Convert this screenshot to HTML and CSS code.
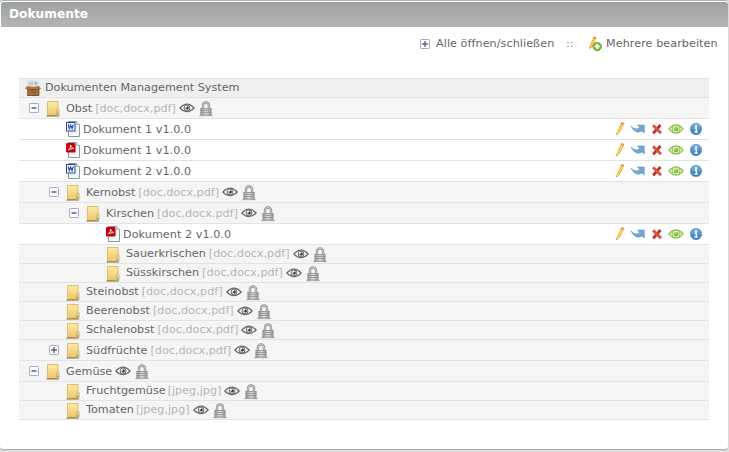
FILE: index.html
```
<!DOCTYPE html>
<html lang="de">
<head>
<meta charset="utf-8">
<title>Dokumente</title>
<link rel="stylesheet" href="styles.css">
</head>
<body>
<svg class="defs" width="0" height="0">
<defs>
<linearGradient id="gold" x2="0" y2="1"><stop stop-color="#fdeba6"/><stop offset="1" stop-color="#ecc76b"/></linearGradient>
<linearGradient id="steel" x2="1" y2="0"><stop stop-color="#909090"/><stop offset=".5" stop-color="#e0e0e0"/><stop offset="1" stop-color="#909090"/></linearGradient>
<linearGradient id="blue" x2="0" y2="1"><stop stop-color="#7fb3e2"/><stop offset="1" stop-color="#3574b5"/></linearGradient>
<symbol id="folder" viewBox="0 0 16 18"><path d="M1 16.500h13" stroke="#bbb"/><path d="M2.500 1.500h10.500v14h-10.500z" fill="url(#gold)" stroke="#e0bd6a"/><path d="M2 15.600h11" stroke="#b98d40" stroke-width="1.300"/><path d="M11.500 15.500V11q.5-2 2-2l.5 1v5.500z" fill="#f6dd95" stroke="#cfa554" stroke-width=".8"/><path d="M12.800 12.500v3" stroke="#35b6d5"/></symbol>
<symbol id="eye" viewBox="0 0 16 12"><path d="M.8 6Q8-1.700 15.200 6 8 13.200.8 6z" fill="#fff" stroke="#6b6b6b" stroke-width="1.100"/><circle cx="8" cy="6" r="3" fill="#bbb" stroke="#777"/><circle cx="8.400" cy="6" r="1.300" fill="#333"/><circle cx="7" cy="4.700" r=".9" fill="#fff"/></symbol>
<symbol id="lock" viewBox="0 0 14 16"><path d="M0 14.700h14" stroke="#bbb"/><path d="M4 8V4.500a3 3 0 0 1 6 0V8" fill="none" stroke="#8c8c8c" stroke-width="2.400"/><path d="M4 8V4.500a3 3 0 0 1 6 0V8" fill="none" stroke="#d5d5d5" stroke-width="1"/><path d="M1.500 7h11v7.500h-11z" fill="url(#steel)"/><path d="M1.500 7.500h11M1.500 9.500h11M1.500 11.500h11M1 14h12" stroke="#909090" stroke-width=".8"/></symbol>
<symbol id="minus" viewBox="0 0 10 10"><rect x=".5" y=".5" width="9" height="9" rx=".7" fill="#fbfbfe" stroke="#aaa8c8"/><path d="M2.500 5h5" stroke="#625e84" stroke-width="1.500"/></symbol>
<symbol id="plus" viewBox="0 0 10 10"><rect x=".5" y=".5" width="9" height="9" rx=".7" fill="#fbfbfe" stroke="#aaa8c8"/><path d="M2 5h6M5 2v6" stroke="#625e84" stroke-width="1.400"/></symbol>
<symbol id="page" viewBox="0 0 15 16"><path d="M2.500.5h8l3 3v12h-11z" fill="#f5fbfb" stroke="#839b9b"/><path d="M10.500.5v3h3" fill="#dcebea" stroke="#9db2b0" stroke-width=".8"/><path d="M5 6h7M5 8h7M5 10h7M5 12h7" stroke="#dceaea" stroke-width=".7"/></symbol>
<symbol id="word" viewBox="0 0 15 16"><use href="#page"/><rect x=".5" y="1.500" width="8.500" height="8.500" fill="#f8f9ff" stroke="#2c46a0"/><path d="M2.200 3.500l1.100 4.200L4.700 4l1.400 3.700L7.300 3.500" fill="none" stroke="#2742a5" stroke-width="1.100"/></symbol>
<symbol id="pdf" viewBox="0 0 15 16"><use href="#page"/><rect y="1" width="9.500" height="9.500" rx="1.300" fill="#c9000b"/><path d="M4.600 3q.3 2.400 3 3.700-3-.5-5 1.300 2.100-2 2-5z" fill="none" stroke="#fff" stroke-width=".85"/></symbol>
<symbol id="pencil" viewBox="0 0 10 16"><path d="M1.200 14l.8-3.500L6 2l3 1-4 8.500z" fill="#f5b932"/><path d="M3.300 11.500L7.300 3" stroke="#ffe27a"/><path d="M5.700 2.800L6.500 1l2.800 1-.8 1.800z" fill="#df8b74"/><path d="M1.200 14l.8-3.400 2.700 1z" fill="#e4c6a5"/><path d="M1.200 14l.3-1.300.9.400z" fill="#493a30"/></symbol>
<symbol id="move" viewBox="0 0 16 12"><path d="M1 3Q4 6.800 7.500 5.800L9.800 4.600 7.500 2h6.800v8L12 7.900Q5.500 12 1 3z" fill="#71a7d2" stroke="#5f95c4" stroke-width=".6"/></symbol>
<symbol id="delete" viewBox="0 0 12 12"><path d="M2.200 10.300Q5.500 6.500 9.500 2" stroke="#c72c20" stroke-width="2.800" fill="none"/><path d="M2 2.300l8 7.900" stroke="#dd5143" stroke-width="2.800"/></symbol>
<symbol id="show" viewBox="0 0 16 12"><path d="M.9 6Q8-2 15.100 6 8 14 .9 6z" fill="#f8fcef" stroke="#90c54c" stroke-width="1.300"/><path d="M5 3q-2 3 0 6M11 3q2 3 0 6" fill="none" stroke="#90c54c"/><circle cx="8" cy="6" r="2.500" fill="#86bd43"/><circle cx="7.300" cy="5" r=".8" fill="#fff"/></symbol>
<symbol id="info" viewBox="0 0 12 12"><circle cx="6" cy="6" r="5.700" fill="url(#blue)" stroke="#477fb8" stroke-width=".6"/><circle cx="6" cy="3" r="1.100" fill="#fff"/><path d="M4.700 5h1.600v4M4.300 9.200h3.600" fill="none" stroke="#fff" stroke-width="1.300"/></symbol>
<symbol id="box" viewBox="0 0 16 17"><path d="M2.500 6.500L3.500 1.500l4-.8 1 4 1-3.500 4 1-.5 4.500z" fill="#d8e5ec" stroke="#b5c1c9" stroke-width=".5"/><path d="M5 2.500v3M7 2v3" stroke="#df9b9b"/><path d="M10.500 2.500l1 2" stroke="#60a86c" stroke-width="1.500"/><path d="M2 7h12v9H2z" fill="#a06d42"/><path d="M0 9l2-3 6 1-1.500 2.500zM16 9l-2-3-6 1 1 2.500z" fill="#b17845"/><path d="M2 9.500h12" stroke="#7a5029" stroke-width=".8"/><path d="M2.500 15.500h11.500V8" fill="none" stroke="#7a5029" stroke-width=".8"/><path d="M6 12h4" stroke="#7a5029"/></symbol>
<symbol id="multi" viewBox="0 0 14 16"><path d="M1 13l.8-3.500L5.300 1.500l3 1-4 9z" fill="#f3b63a"/><path d="M3 11L6.500 3" stroke="#ffe27a" stroke-width=".8"/><path d="M5 2.200L5.800.6l2.700 1-.7 1.800z" fill="#df8d74"/><path d="M1 13.500l.7-3.500 2 1z" fill="#d7b18c"/><circle cx="9.200" cy="10.500" r="4.300" fill="#79b82d" stroke="#5da01f" stroke-width=".6"/><path d="M6.700 10.500h5M9.200 8v5" stroke="#fff" stroke-width="1.800"/></symbol>
</defs>
</svg>
<main class="panel">
<h1 class="title">Dokumente</h1>
<div class="tools"><svg class="toggle"><use href="#plus"/></svg><a class="toggle-all">Alle öffnen/schließen</a><span class="sep">::</span><svg class="multi"><use href="#multi"/></svg><a class="edit-all">Mehrere bearbeiten</a></div>
<ul class="tree">
<li class="root"><svg class="box"><use href="#box"/></svg><span>Dokumenten Management System</span></li>
<li class="row l0"><svg class="toggle"><use href="#minus"/></svg><svg class="folder"><use href="#folder"/></svg><span class="name">Obst</span><span class="types">[doc,docx,pdf]</span><svg class="eye"><use href="#eye"/></svg><svg class="lock"><use href="#lock"/></svg></li>
<li class="row doc l1"><svg class="file"><use href="#word"/></svg><span class="name">Dokument 1 v1.0.0</span><div class="actions"><svg class="pencil"><use href="#pencil"/></svg><svg class="move"><use href="#move"/></svg><svg class="delete"><use href="#delete"/></svg><svg class="show"><use href="#show"/></svg><svg class="info"><use href="#info"/></svg></div></li>
<li class="row doc l1"><svg class="file"><use href="#pdf"/></svg><span class="name">Dokument 1 v1.0.0</span><div class="actions"><svg class="pencil"><use href="#pencil"/></svg><svg class="move"><use href="#move"/></svg><svg class="delete"><use href="#delete"/></svg><svg class="show"><use href="#show"/></svg><svg class="info"><use href="#info"/></svg></div></li>
<li class="row doc l1"><svg class="file"><use href="#word"/></svg><span class="name">Dokument 2 v1.0.0</span><div class="actions"><svg class="pencil"><use href="#pencil"/></svg><svg class="move"><use href="#move"/></svg><svg class="delete"><use href="#delete"/></svg><svg class="show"><use href="#show"/></svg><svg class="info"><use href="#info"/></svg></div></li>
<li class="row l1"><svg class="toggle"><use href="#minus"/></svg><svg class="folder"><use href="#folder"/></svg><span class="name">Kernobst</span><span class="types">[doc,docx,pdf]</span><svg class="eye"><use href="#eye"/></svg><svg class="lock"><use href="#lock"/></svg></li>
<li class="row l2"><svg class="toggle"><use href="#minus"/></svg><svg class="folder"><use href="#folder"/></svg><span class="name">Kirschen</span><span class="types">[doc,docx,pdf]</span><svg class="eye"><use href="#eye"/></svg><svg class="lock"><use href="#lock"/></svg></li>
<li class="row doc l3"><svg class="file"><use href="#pdf"/></svg><span class="name">Dokument 2 v1.0.0</span><div class="actions"><svg class="pencil"><use href="#pencil"/></svg><svg class="move"><use href="#move"/></svg><svg class="delete"><use href="#delete"/></svg><svg class="show"><use href="#show"/></svg><svg class="info"><use href="#info"/></svg></div></li>
<li class="row leaf l3"><svg class="folder"><use href="#folder"/></svg><span class="name">Sauerkrischen</span><span class="types">[doc,docx,pdf]</span><svg class="eye"><use href="#eye"/></svg><svg class="lock"><use href="#lock"/></svg></li>
<li class="row leaf l3"><svg class="folder"><use href="#folder"/></svg><span class="name">Süsskirschen</span><span class="types">[doc,docx,pdf]</span><svg class="eye"><use href="#eye"/></svg><svg class="lock"><use href="#lock"/></svg></li>
<li class="row leaf l1"><svg class="folder"><use href="#folder"/></svg><span class="name">Steinobst</span><span class="types">[doc,docx,pdf]</span><svg class="eye"><use href="#eye"/></svg><svg class="lock"><use href="#lock"/></svg></li>
<li class="row leaf l1"><svg class="folder"><use href="#folder"/></svg><span class="name">Beerenobst</span><span class="types">[doc,docx,pdf]</span><svg class="eye"><use href="#eye"/></svg><svg class="lock"><use href="#lock"/></svg></li>
<li class="row leaf l1"><svg class="folder"><use href="#folder"/></svg><span class="name">Schalenobst</span><span class="types">[doc,docx,pdf]</span><svg class="eye"><use href="#eye"/></svg><svg class="lock"><use href="#lock"/></svg></li>
<li class="row l1"><svg class="toggle"><use href="#plus"/></svg><svg class="folder"><use href="#folder"/></svg><span class="name">Südfrüchte</span><span class="types">[doc,docx,pdf]</span><svg class="eye"><use href="#eye"/></svg><svg class="lock"><use href="#lock"/></svg></li>
<li class="row l0"><svg class="toggle"><use href="#minus"/></svg><svg class="folder"><use href="#folder"/></svg><span class="name">Gemüse</span><svg class="eye"><use href="#eye"/></svg><svg class="lock"><use href="#lock"/></svg></li>
<li class="row leaf l1"><svg class="folder"><use href="#folder"/></svg><span class="name">Fruchtgemüse</span><span class="types short">[jpeg,jpg]</span><svg class="eye"><use href="#eye"/></svg><svg class="lock"><use href="#lock"/></svg></li>
<li class="row leaf l1"><svg class="folder"><use href="#folder"/></svg><span class="name">Tomaten</span><span class="types short">[jpeg,jpg]</span><svg class="eye"><use href="#eye"/></svg><svg class="lock"><use href="#lock"/></svg></li>
</ul>
</main>
</body>
</html>
```

FILE: styles.css
```
* { box-sizing: border-box; }
body {
  margin: 0;
  height: 452px;
  overflow: hidden;
  background: #dedede;
  font: 11.2px/18px "DejaVu Sans", sans-serif;
  color: #666;
  white-space: nowrap;
}
.defs { display: block; }
svg { flex: none; }
.panel {
  height: 449px;
  width: 728px;
  padding: 1px 0 0 1px;
  border-top: 1px solid #b3b3b3;
  background: #fff;
  border-radius: 3px;
  box-shadow: 0 1px 1px #aaa;
}
.title {
  margin: 0;
  height: 25px;
  padding-left: 8px;
  font-size: 12.2px;
  line-height: 24px;
  color: #fff;
  background: linear-gradient(#9fa19e, #b3b6b2);
  border-radius: 3px 3px 0 0;
}
.tools {
  display: flex;
  align-items: center;
  height: 34px;
  padding-left: 419px;
}
.tools .toggle { margin-right: 6px; }
.toggle-all, .edit-all { letter-spacing: .06px; }
.toggle-all { width: 118px; }
.sep { margin-left: 12px; width: 9px; color: #6a98ab; }
.multi { width: 14px; height: 16px; margin: 0 4px 0 13px; }
.tree {
  list-style: none;
  margin: 17px 0 0 18px;
  padding: 0;
  width: 690px;
}
.root, .row {
  display: flex;
  align-items: center;
  border-bottom: 1px solid #e3e3e3;
  background: #f5f5f5;
}
.root { height: 20px; border-top: 1px solid #e3e3e3; background: #efefef; padding-left: 6px; }
.box { width: 16px; height: 17px; margin-right: 4px; }
.row { height: 21px; }
.row .name, .types { padding-top: 2px; }
.row.leaf { height: 19px; }
.row.leaf .name, .leaf .types { padding-top: 0; }
.row.doc { background: #fff; }
.doc .name { letter-spacing: .05px; }
.l0 { padding-left: 10px; }
.l1 { padding-left: 30px; }
.l2 { padding-left: 50px; }
.leaf.l1, .doc.l1 { padding-left: 47px; }
.leaf.l3, .doc.l3 { padding-left: 87px; }
.toggle { width: 10px; height: 10px; }
.row .toggle { margin-right: 7px; }
.folder { width: 16px; height: 18px; margin: 2px 5px 0 -1px; }
.leaf .folder { margin-top: 1px; }
.types { margin-left: 3px; color: #b5b5b5; }
.types.short { margin-left: 2px; }
.eye { width: 16px; height: 12px; margin-left: 3px; }
.lock { width: 14px; height: 16px; margin: 2px 0 0 4px; }
.file { width: 15px; height: 16px; margin-right: 2px; }
.actions {
  display: flex;
  align-items: center;
  margin-left: auto;
  padding-right: 7px;
}
.pencil { width: 10px; height: 16px; margin-right: 5px; }
.move { width: 16px; height: 12px; margin-right: 5px; }
.delete { width: 12px; height: 12px; margin-right: 5px; }
.show { width: 16px; height: 12px; margin-right: 6px; }
.info { width: 12px; height: 12px; }
```
